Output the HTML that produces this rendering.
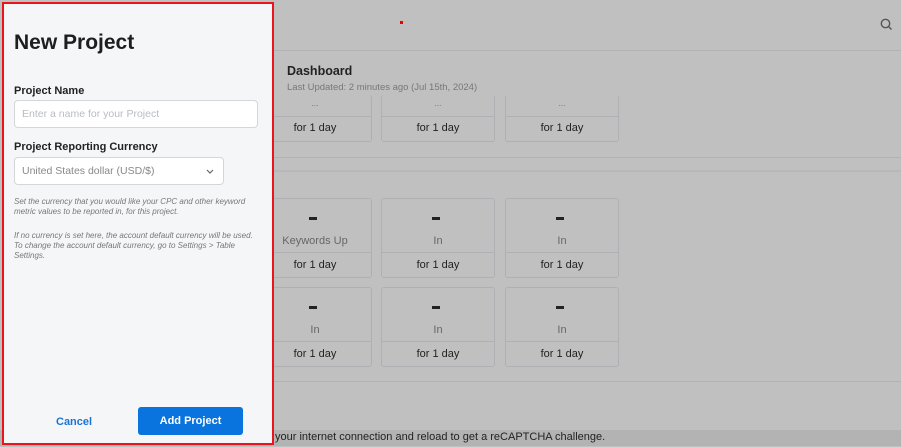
<!DOCTYPE html>
<html><head><meta charset="utf-8"><style>
*{box-sizing:border-box;margin:0;padding:0}
body{width:901px;height:447px;overflow:hidden;background:#c0c0c0;font-family:"Liberation Sans",sans-serif;position:relative;color:#222}
.abs{position:absolute}
.hl{position:absolute;left:258px;right:0;height:1px;background:#b2b2b4}
.card{position:absolute;width:114px;border:1px solid #b0b0b4;border-radius:3px;text-align:center}
.card .div{position:absolute;left:0;right:0;height:1px;background:#b0b0b4}
.dash{position:absolute;left:50px;width:8px;height:3px;background:#222}
.lbl{position:absolute;left:0;right:0;font-size:11px;color:#666}
.day{position:absolute;left:0;right:0;font-size:11px;color:#222}
#panel{position:absolute;left:2px;top:2px;width:272px;height:443px;background:#f5f6f8;border:2px solid #e8161b}
</style></head><body>
<div class="abs" style="left:400px;top:21px;width:3px;height:3px;background:#e00"></div>
<svg class="abs" style="left:880px;top:18px" width="13" height="13" viewBox="0 0 13 13"><circle cx="5.5" cy="5.5" r="4.2" fill="none" stroke="#555" stroke-width="1.4"/><path d="M8.5 8.5L11.5 11.5" stroke="#555" stroke-width="1.4"/></svg>
<div class="hl" style="top:50px"></div>
<div class="abs" style="left:287px;top:64px;font-size:12.5px;font-weight:bold;color:#222">Dashboard</div>
<div class="abs" style="left:287px;top:82px;font-size:9.5px;color:#777">Last Updated: 2 minutes ago (Jul 15th, 2024)</div>

<!-- row1 -->
<div class="card" style="left:258px;top:95px;height:47px;border-top:none"><div class="div" style="top:21px"></div><div class="lbl" style="top:4px;font-size:8px">...</div><div class="day" style="top:27px">for 1 day</div></div>
<div class="card" style="left:381px;top:95px;height:47px;border-top:none"><div class="div" style="top:21px"></div><div class="lbl" style="top:4px;font-size:8px">...</div><div class="day" style="top:27px">for 1 day</div></div>
<div class="card" style="left:505px;top:95px;height:47px;border-top:none"><div class="div" style="top:21px"></div><div class="lbl" style="top:4px;font-size:8px">...</div><div class="day" style="top:27px">for 1 day</div></div>
<div class="hl" style="top:157px"></div>
<div class="hl" style="top:170px;height:2px;background:#b8b8bc"></div>

<!-- row2 -->
<div class="card" style="left:258px;top:198px;height:80px"><div class="div" style="top:53px"></div><div class="dash" style="top:18px"></div><div class="lbl" style="top:36px">Keywords Up</div><div class="day" style="top:60px">for 1 day</div></div>
<div class="card" style="left:381px;top:198px;height:80px"><div class="div" style="top:53px"></div><div class="dash" style="top:18px"></div><div class="lbl" style="top:36px">In</div><div class="day" style="top:60px">for 1 day</div></div>
<div class="card" style="left:505px;top:198px;height:80px"><div class="div" style="top:53px"></div><div class="dash" style="top:18px"></div><div class="lbl" style="top:36px">In</div><div class="day" style="top:60px">for 1 day</div></div>
<!-- row3 -->
<div class="card" style="left:258px;top:287px;height:80px"><div class="div" style="top:53px"></div><div class="dash" style="top:18px"></div><div class="lbl" style="top:36px">In</div><div class="day" style="top:60px">for 1 day</div></div>
<div class="card" style="left:381px;top:287px;height:80px"><div class="div" style="top:53px"></div><div class="dash" style="top:18px"></div><div class="lbl" style="top:36px">In</div><div class="day" style="top:60px">for 1 day</div></div>
<div class="card" style="left:505px;top:287px;height:80px"><div class="div" style="top:53px"></div><div class="dash" style="top:18px"></div><div class="lbl" style="top:36px">In</div><div class="day" style="top:60px">for 1 day</div></div>
<div class="hl" style="top:381px"></div>

<div class="abs" style="left:0;top:430px;width:901px;height:16px;background:#b3b3b3"></div>
<div class="abs" style="left:275px;top:431px;font-size:11px;color:#222">your internet connection and reload to get a reCAPTCHA challenge.</div>

<div id="panel">
<div class="abs" style="left:10px;top:27px;font-size:21px;font-weight:bold;color:#1e1e1e">New Project</div>
<div class="abs" style="left:10px;top:81px;font-size:11px;font-weight:bold;color:#222">Project Name</div>
<div class="abs" style="left:10px;top:96px;width:244px;height:28px;border:1px solid #d4d6da;border-radius:4px;background:#fff;font-size:10.5px;color:#b8bcc2;padding:7px 0 0 7px">Enter a name for your Project</div>
<div class="abs" style="left:10px;top:137px;font-size:11px;font-weight:bold;color:#222">Project Reporting Currency</div>
<div class="abs" style="left:10px;top:153px;width:210px;height:28px;border:1px solid #d4d6da;border-radius:4px;background:#fff;font-size:10.5px;color:#888;padding:7px 0 0 7px">United States dollar (USD/$)
<svg class="abs" style="right:9px;top:11px" width="8" height="5" viewBox="0 0 8 5"><path d="M1 1L4 4L7 1" fill="none" stroke="#666" stroke-width="1.2"/></svg></div>
<div class="abs" style="left:10px;top:193px;width:242px;font-size:8px;font-style:italic;color:#777;line-height:10px">Set the currency that you would like your CPC and other keyword metric values to be reported in, for this project.</div>
<div class="abs" style="left:10px;top:227px;width:242px;font-size:8px;font-style:italic;color:#777;line-height:10px">If no currency is set here, the account default currency will be used. To change the account default currency, go to Settings &gt; Table Settings.</div>
<div class="abs" style="left:52px;top:412px;font-size:11px;font-weight:bold;color:#1a73d4">Cancel</div>
<div class="abs" style="left:134px;top:403px;width:105px;height:28px;background:#0a74de;border-radius:3px;color:#fff;font-size:11px;font-weight:bold;text-align:center;line-height:28px">Add Project</div>
</div>
</body></html>
